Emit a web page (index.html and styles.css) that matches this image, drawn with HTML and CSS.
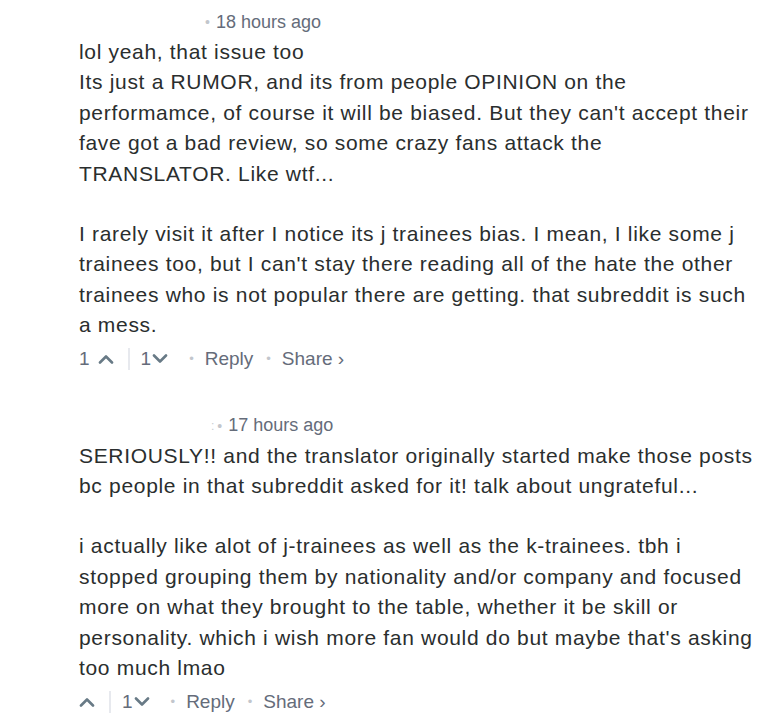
FILE: index.html
```html
<!DOCTYPE html>
<html lang="en">
<head>
<meta charset="utf-8">
<title>Comments</title>
<link rel="stylesheet" href="styles.css">
</head>
<body>
<div class="thread">
  <article class="comment">
    <header class="meta meta-first">
      <span class="bullet">•</span>
      <span class="time">18 hours ago</span>
    </header>
    <div class="message">
      <p>lol yeah, that issue too<br>Its just a RUMOR, and its from people OPINION on the performamce, of course it will be biased. But they can't accept their fave got a bad review, so some crazy fans attack the TRANSLATOR. Like wtf...</p>
      <p>I rarely visit it after I notice its j trainees bias. I mean, I like some j trainees too, but I can't stay there reading all of the hate the other trainees who is not popular there are getting. that subreddit is such a mess.</p>
    </div>
    <footer class="actions">
      <span class="vote up"><span class="count">1</span>
        <svg class="chev" viewBox="0 0 16 10" width="16" height="10"><path d="M2 8.5 L8 2.5 L14 8.5" fill="none" stroke="currentColor" stroke-width="2.6" stroke-linecap="round" stroke-linejoin="round"/></svg>
      </span>
      <span class="divider"></span>
      <span class="vote down"><span class="count">1</span>
        <svg class="chev" viewBox="0 0 16 10" width="16" height="10"><path d="M2 1.5 L8 7.5 L14 1.5" fill="none" stroke="currentColor" stroke-width="2.6" stroke-linecap="round" stroke-linejoin="round"/></svg>
      </span>
      <span class="bullet">•</span>
      <span class="link">Reply</span>
      <span class="bullet">•</span>
      <span class="link">Share ›</span>
    </footer>
  </article>

  <article class="comment">
    <header class="meta meta-second">
      <span class="remnant">:</span>
      <span class="bullet">•</span>
      <span class="time">17 hours ago</span>
    </header>
    <div class="message">
      <p>SERIOUSLY!! and the translator originally started make those posts bc people in that subreddit asked for it! talk about ungrateful...</p>
      <p>i actually like alot of j-trainees as well as the k-trainees. tbh i stopped grouping them by nationality and/or company and focused more on what they brought to the table, whether it be skill or personality. which i wish more fan would do but maybe that's asking too much lmao</p>
    </div>
    <footer class="actions">
      <span class="vote up">
        <svg class="chev" viewBox="0 0 16 10" width="16" height="10"><path d="M2 8.5 L8 2.5 L14 8.5" fill="none" stroke="currentColor" stroke-width="2.6" stroke-linecap="round" stroke-linejoin="round"/></svg>
      </span>
      <span class="divider"></span>
      <span class="vote down"><span class="count">1</span>
        <svg class="chev" viewBox="0 0 16 10" width="16" height="10"><path d="M2 1.5 L8 7.5 L14 1.5" fill="none" stroke="currentColor" stroke-width="2.6" stroke-linecap="round" stroke-linejoin="round"/></svg>
      </span>
      <span class="bullet">•</span>
      <span class="link">Reply</span>
      <span class="bullet">•</span>
      <span class="link">Share ›</span>
    </footer>
  </article>
</div>
</body>
</html>
```

FILE: styles.css
```css
html, body {
  margin: 0;
  padding: 0;
  background: #ffffff;
}

body {
  font-family: "Liberation Sans", Arial, sans-serif;
  color: #2a2e2e;
}

.thread {
  padding: 10px 21px 0 79px;
}

.comment + .comment {
  margin-top: 41px;
}

.meta {
  display: flex;
  align-items: center;
  height: 24px;
  font-size: 18px;
  color: #656c7a;
}

.meta-first {
  padding-left: 126px;
}

.meta-second {
  padding-left: 132px;
}

.meta .bullet {
  color: #c2c6cc;
  font-size: 14px;
  margin-right: 6px;
}

.meta .remnant {
  color: #c9cdd2;
  font-size: 12px;
  margin-right: 3px;
}

.message {
  margin-top: 3px;
  font-size: 21px;
  line-height: 30.4px;
  letter-spacing: 0.68px;
}

.message p {
  margin: 0;
}

.message p + p {
  margin-top: 30px;
}

.actions {
  display: flex;
  align-items: center;
  height: 28px;
  margin-top: 4px;
  font-size: 19px;
  color: #656c7a;
}

.vote {
  display: flex;
  align-items: center;
  color: #687a86;
}

.vote .count {
  color: #656c7a;
}

.vote.up .count {
  margin-right: 8px;
}

.vote.down .count {
  margin-right: 1px;
}

.chev {
  display: block;
}

.divider {
  width: 2px;
  height: 22px;
  background: #e7e9ee;
  margin: 0 11px 0 14px;
}

.actions .bullet {
  color: #c2c6cc;
  font-size: 13px;
  margin: 0 11px 0 21px;
}

.actions .link + .bullet {
  margin-left: 13px;
}
```
